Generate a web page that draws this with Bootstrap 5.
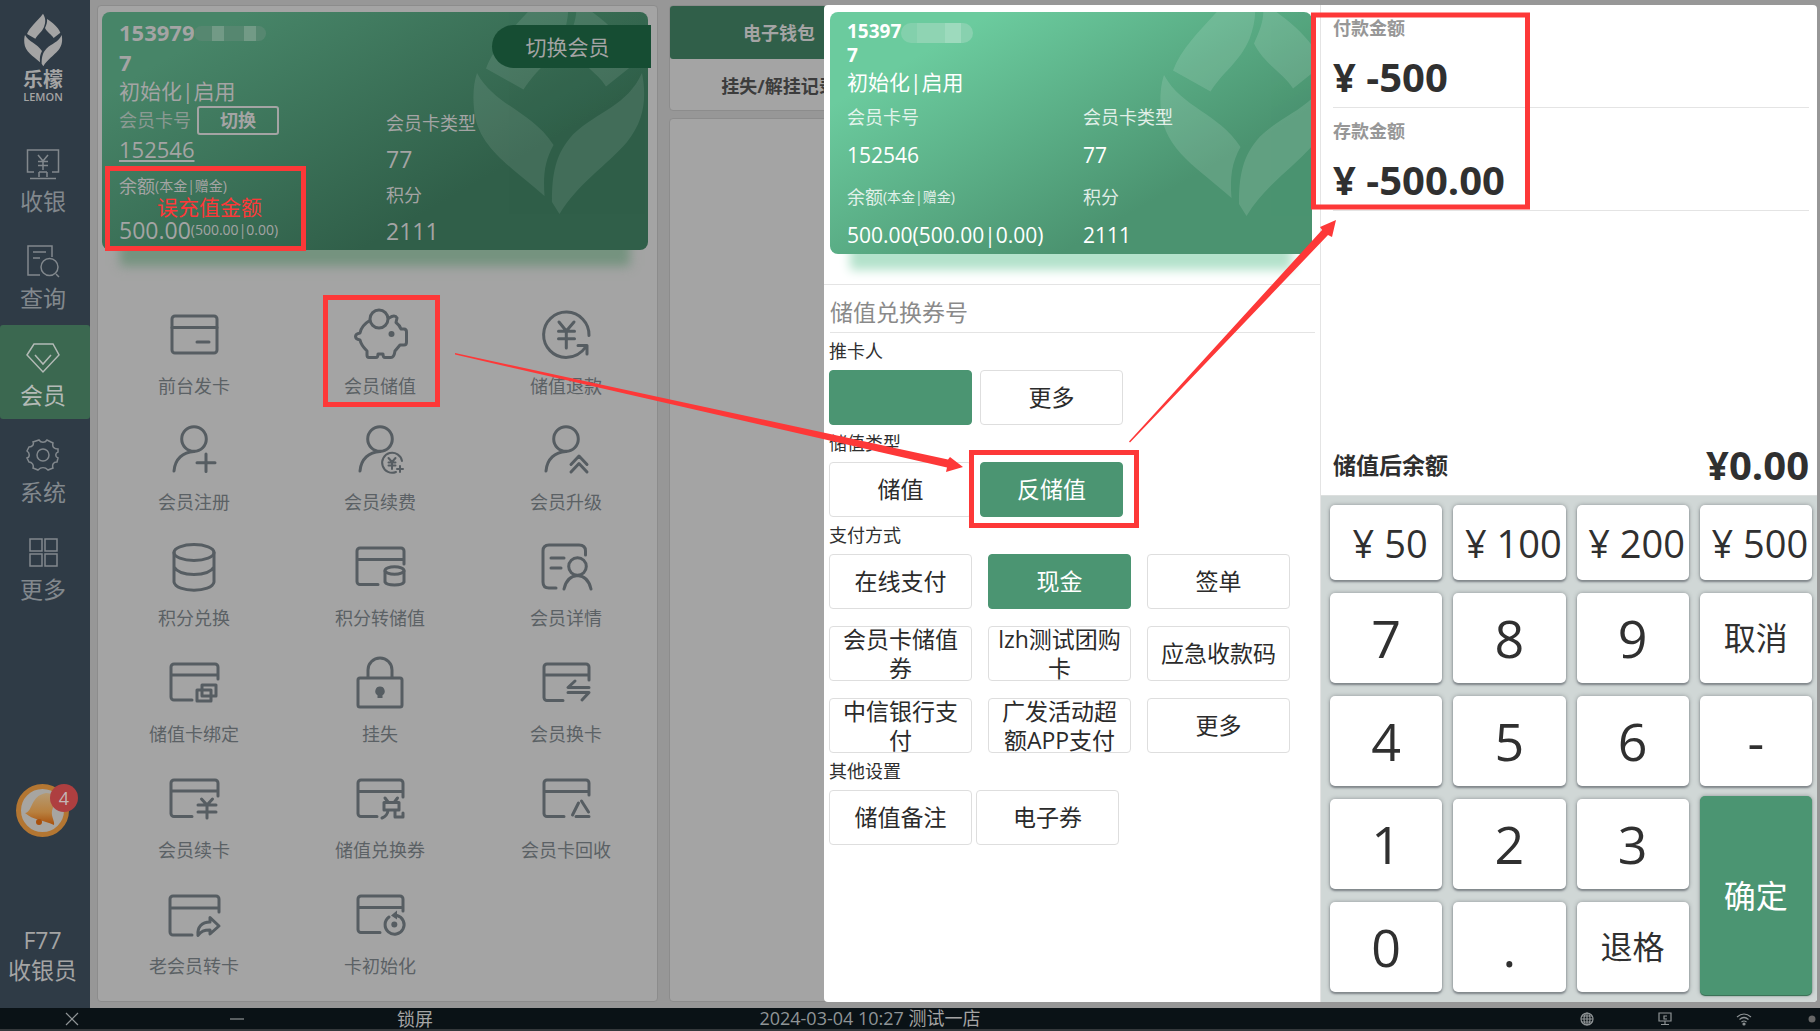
<!DOCTYPE html>
<html lang="zh-CN">
<head>
<meta charset="utf-8">
<meta name="viewport" content="width=device-width, initial-scale=1">
<title>会员储值</title>
<link href="https://cdn.jsdelivr.net/npm/bootstrap@5.3.0/dist/css/bootstrap.min.css" rel="stylesheet">
<script src="https://cdn.jsdelivr.net/npm/bootstrap@5.3.0/dist/js/bootstrap.bundle.min.js"></script>
<style>
:root{--green:#4b9572;--dim-white:#a4a4a4;--dim-bg:#979797;--dim-line:#8c8c8c;--line:#e4e4e4;--red:#fd3838}
body{font-family:"Open Sans","Noto Sans CJK SC",sans-serif;font-size:18px;line-height:24px;background:var(--dim-bg);color:#2f2f2f}
a{text-decoration:none;color:inherit}
button{color:inherit;padding:0}
.pos-app{min-height:100vh}
/* side rail */
.rail{width:90px;background:#2f3b46;color:#82888d;font-size:23px;line-height:28px;flex:none}
.brand-box{height:127px;padding:13px 4px 0 0;color:var(--dim-white);line-height:24px}
.brand-zh{font-size:20px;font-weight:700;line-height:26px}
.brand-en{font-size:11px;line-height:8px;font-weight:600}
.rail-item{height:94px;padding:16px 4px 0 0;gap:6px;margin-bottom:3px}
.rail-item svg{width:34px;height:34px;fill:none;stroke:currentColor;stroke-width:1.5}
.rail-on{background:#3b6850;color:#b3bab6;border-radius:3px}
.rail-foot{padding-right:5px}
.bell-btn{width:53px;height:53px;border-radius:50%;border:5px solid #b37632;background:#a7a5a1;margin-bottom:88px}
.bell-count{width:28px;height:28px;border-radius:50%;background:#ae3f40;color:#c4b7b6;font-size:18px;line-height:28px;right:-14px;top:-5px}
.cashier{font-size:23px;line-height:30px;color:var(--dim-white);margin-bottom:23px}
/* dimmed page under the dialog */
.stage{padding:5px 3px 6px 7px;gap:11px}
.sheet{background:var(--dim-white);border:1px solid var(--dim-line);border-radius:4px}
.sheet-main{width:561px;flex:none;padding:6px 0 11px}
.vip{color:#fff;border-radius:8px;overflow:hidden;padding-left:17px}
.vip-wrap{position:relative;border-radius:8px}
.vip-dim{background:linear-gradient(150deg,#478568 15%,#305f49 70%);color:var(--dim-white);height:238px;padding-top:5px}
.wrap-dim{margin:0 9px 0 4px;box-shadow:0 34px 10px -18px #75937f}
.vip-live{background:linear-gradient(150deg,#6bcb9e 18%,#4b9370 72%);height:242px;padding-top:7px}
.wrap-live{margin:7px 8px 0 6px;box-shadow:0 36px 10px -20px #b3e2cb}
.leaf{position:absolute;width:180px;height:243px;top:-36px;fill:#fff;opacity:.12}
.wrap-dim .leaf{right:0;top:-38px;opacity:.09}
.wrap-live .leaf{right:-23px}
.vip-clip{position:relative}
.t23{font-size:23px}
.t14{font-size:14px;line-height:18px}
.vip-dim .num{font-size:22px;font-weight:700;line-height:30px}
.vip-dim .state{font-size:21px;line-height:28px}
.vip-live .num{font-size:19px;font-weight:700;line-height:24px}
.vip-live .state{font-size:21px;line-height:30px}
.veil{display:inline-block;width:72px;height:15px;border-radius:8px;background:linear-gradient(90deg,#568770 0 18px,#729a86 18px 30px,#568770 30px 50px,#729a86 50px 62px,#568770 62px)}
.vip-live .veil{height:20px;border-radius:10px;background:linear-gradient(90deg,#83d0ac 0 16px,#8fd4b3 16px 44px,#9ddabd 44px 60px,#88d1af 60px);vertical-align:middle}
.c-left{width:267px;flex:none}
.vip-live .c-left{width:236px}
.vip-dim .c-right div{line-height:36px}
.row-card{line-height:30px;gap:6px}
.row-no{line-height:28px;font-size:22px}
.row-lab{line-height:24px;margin-top:11px}
.row-bal{line-height:24px;margin-top:20px}
.swap-btn{width:82px;height:29px;border:2px solid var(--dim-white);border-radius:3px;background:none;font-weight:700;font-size:18px;line-height:24px}
.lab40{line-height:40px;font-size:18px;opacity:.82}
.val34{line-height:36px;font-size:21px;margin-bottom:4px;white-space:nowrap}
.change-vip{position:absolute;right:-3px;top:13px;width:159px;height:43px;border:0;border-radius:22px 0 0 22px;background:#164d33;color:var(--dim-white);font-size:21px;padding-right:8px}
.fn-grid{display:grid;grid-template-columns:repeat(3,1fr);grid-auto-rows:minmax(110px,1fr);margin:45px -2px 0 0;padding-left:3px;color:#5b6165}
.fn-grid a{gap:11px}
.fn-grid svg{width:56px;height:56px;fill:none;stroke:#565d62;stroke-width:3;stroke-linecap:round;stroke-linejoin:round}
.fn-grid .sol{fill:#565d62;stroke:none}
.fn-grid .thin{stroke-width:2}
.tabs-col{gap:7px}
.tab-strip{height:106px}
.tab-strip a{width:218px;height:53px;line-height:54px;font-weight:700;color:#3c3c3c;text-align:center}
.tab-strip .tab-on{background:#305f49;color:var(--dim-white);border-radius:3px}
/* dialog */
.dlg{position:absolute;top:5px;bottom:6px;right:3px;width:57.4%;background:#fff;border-radius:4px;overflow:hidden}
.dlg-form{border-right:1px solid var(--line)}
.coupon{border:0;border-bottom:1px solid var(--line);height:48px;font-size:23px;padding:6px 0 0;margin:0 5px 0 6px;outline:0;border-radius:0;background:none}
.coupon::placeholder{color:#8a8a8a;opacity:1}
.rule{border-top:1px solid var(--line);margin-top:30px}
.set{border:0;padding:0 5px;margin:0;min-width:0}
.set legend{font-size:18px;line-height:37px;margin:0;float:none}
.opt{width:143px;height:55px;border:1px solid #dedede;border-radius:4px;background:#fff;font-size:23px;line-height:29px;color:#2b2b2b;display:flex;align-items:center;justify-content:center}
.opt-on{background:var(--green);border-color:var(--green);color:#fff}
.pay-grid{display:grid;grid-template-columns:repeat(3,143px);gap:17px 16px}
.dlg-pay{flex:0 0 496px}
.amt{padding:9px 0 2px;margin:0 8px 0 12px;border-bottom:1px solid var(--line)}
.amt-lab{font-weight:600;color:#979797;line-height:28px;margin-bottom:7px}
.amt-val{font-size:40px;font-weight:700;line-height:56px;color:#303030}
.after{height:57px;padding:0 8px 4px 12px;border-bottom:1px solid #dcdfde}
.pad{display:grid;grid-template-columns:repeat(4,1fr);grid-template-rows:75px repeat(4,90px);gap:13px 11px;padding:9px 5px 10px 9px;background:#d0d7d6}
.key{border:0;border-radius:5px;background:#fff;color:#303030;font-size:52px;line-height:60px;box-shadow:0 2px 2px #82888c,0 0 4px #8e9497}
.key-cash{font-size:38px;padding-left:8px;white-space:nowrap}
.key-zh{font-size:32px}
.key-ok{background:var(--green);color:#fff;grid-row:span 2;margin:-3px 0;box-shadow:0 1px 1px #2f6b4d,0 0 4px #8e9497}
/* status bar */
.status{display:grid;grid-template-columns:144fr 186fr 170fr 740fr 308fr 78fr 78fr 80fr 36fr;height:23px;background:#0a1216;color:#8f9496;border-bottom:2px solid #34383b;line-height:21px;place-items:center}
.status button{border:0;background:none;line-height:20px;color:var(--dim-white)}
.status .shop{color:var(--dim-white)}
.status svg{display:block;fill:none;stroke:#8f9496;stroke-width:1.2}
/* teaching marks drawn over the screen */
.marks{position:absolute;left:0;top:0;width:100%;height:100%;pointer-events:none;z-index:5}
.note{position:absolute;left:55px;top:185px;color:var(--red);font-size:21px;line-height:20px;z-index:6}
</style>
</head>
<body>
<svg class="d-none">
  <symbol id="lemon" viewBox="70 38 120 162">
    <path d="M130 40C139 54 138 66 133 80C126 96 116 101 107 115L82 101C90 80 112 64 130 40Z"/>
    <path d="M142 56C158 66 175 80 182 97L162 113C156 103 143 97 136 83C141 72 143 66 142 56Z"/>
    <path d="M76 104C88 126 112 129 127 152C121 163 120 172 121 186C100 167 76 154 74 128C73 118 74 110 76 104Z"/>
    <path d="M186 104C189 120 188 135 176 150C162 166 143 178 131 198L126 190C126 172 128 158 140 145C157 129 176 126 186 104Z"/>
  </symbol>
</svg>
<div class="pos-app d-flex flex-column position-relative">
  <div class="d-flex flex-grow-1">
    <nav class="rail d-flex flex-column text-center">
      <div class="brand-box mb-1">
        <svg width="40" height="54" fill="#a4a4a4" class="d-block mx-auto"><use href="#lemon"/></svg>
        <div class="brand-zh">乐檬</div><div class="brand-en">LEMON</div>
      </div>
      <a href="#" class="rail-item d-flex flex-column align-items-center"><svg viewBox="0 0 34 34"><path d="M8 25H1.500V3h31v22H26M13 25v5M21 25v5M13 25h8M4 31.500h26M12 8l5 6 5-6M17 14v9M12 14.500h10M12 18.500h10"/></svg>收银</a>
      <a href="#" class="rail-item d-flex flex-column align-items-center"><svg viewBox="0 0 34 34"><path d="M14 31H2V2h24v11M7 8h13M7 14h7M30 30l3 3"/><circle cx="23.500" cy="23" r="8.500"/></svg>查询</a>
      <a href="#" class="rail-item rail-on d-flex flex-column align-items-center"><svg viewBox="0 0 34 34"><path d="M8 3h19l6 11-16 17L1 14ZM9 14l8 9 8-9"/></svg>会员</a>
      <a href="#" class="rail-item d-flex flex-column align-items-center"><svg viewBox="0 0 34 34"><path d="M13 2c2 3 6 3 8 0l6 3c-1 4 1 6 5 6v3c-3 1-3 5 0 6l-1 4c-4 0-5 3-4 6l-5 2c-3-3-7-3-10 0l-5-2c1-3-1-6-4-6l-2-4c3-1 3-5 0-7l2-4c4 0 5-3 4-5Z"/><circle cx="17" cy="17" r="6"/></svg>系统</a>
      <a href="#" class="rail-item d-flex flex-column align-items-center"><svg viewBox="0 0 34 34"><path d="M4 4h12v12H4ZM19 4h12v12H19ZM4 19h12v12H4ZM19 19h12v12H19Z"/></svg>更多</a>
      <div class="rail-foot mt-auto">
        <button type="button" class="bell-btn position-relative d-block mx-auto" aria-label="通知">
          <svg viewBox="0 0 43 43" class="d-block w-100 h-100"><defs><linearGradient id="bl" x1="0" y1="0" x2="0" y2="1"><stop offset="0" stop-color="#b59a72"/><stop offset=".6" stop-color="#b8803f"/><stop offset="1" stop-color="#a8500c"/></linearGradient></defs><path d="M4 24C12 23 9 7 25 4C37 4 33 16 31 22C30 28 34 32 33 36C22 31 12 31 4 24Z" fill="url(#bl)"/><circle cx="18" cy="33" r="3" fill="#a8500c"/></svg>
          <span class="bell-count position-absolute">4</span>
        </button>
        <div class="cashier">F77<br>收银员</div>
      </div>
    </nav>

    <main class="stage d-flex flex-grow-1 position-relative">
      <section class="sheet sheet-main d-flex flex-column">
        <div class="vip-wrap wrap-dim">
          <div class="vip vip-dim vip-clip">
            <svg class="leaf"><use href="#lemon"/></svg>
            <div class="num">153979<span class="veil"></span><br>7</div>
            <div class="state">初始化|启用</div>
            <div class="d-flex">
              <div class="c-left">
                <div class="row-card d-flex align-items-center"><span class="opacity-75">会员卡号</span><button type="button" class="swap-btn">切换</button></div>
                <div class="row-no"><a href="#" class="text-decoration-underline">152546</a></div>
                <div class="row-lab d-flex align-items-center">余额<span class="t14">(本金|赠金)</span></div>
                <div class="row-bal d-flex align-items-center"><span class="t23">500.00</span><span class="t14">(500.00|0.00)</span></div>
              </div>
              <div class="c-right"><div>会员卡类型</div><div class="t23">77</div><div>积分</div><div class="t23">2111</div></div>
            </div>
            <span class="note">误充值金额</span>
          </div>
          <button type="button" class="change-vip">切换会员</button>
        </div>
        <div class="fn-grid flex-grow-1 text-center">
          <a href="#" class="d-flex flex-column align-items-center justify-content-center"><svg viewBox="0 0 56 56"><rect x="6" y="9" width="45" height="37" rx="3"/><path d="M6 20.500h45M31 35h12"/></svg>前台发卡</a>
          <a href="#" class="d-flex flex-column align-items-center justify-content-center"><svg viewBox="0 0 56 56"><circle cx="27" cy="12" r="9"/><path d="M17 14C12 17 9 21 8 26C2 27 2 32 8 33C9 38 12 41 15 44V48Q15 50.500 17 50.500H24Q26 50.500 26 47H31Q31 50.500 33 50.500H39Q42 50.500 43 44L48 38H52Q54.500 38 54.500 35V25Q54.500 22 52 22H49C48 19 46 17 44 15.500L45 11Q43 7 37 11"/><circle class="sol" cx="39.500" cy="27" r="3"/></svg>会员储值</a>
          <a href="#" class="d-flex flex-column align-items-center justify-content-center"><svg viewBox="0 0 56 56"><path d="M51 28.500A22.700 22.700 0 1 0 28 50.500C36 50.500 43 47 48.500 39M40 38.500h9V47M21 15l7.300 9L36 15M28.300 24v17M20.500 24.300h16M20.500 31.700h16"/></svg>储值退款</a>
          <a href="#" class="d-flex flex-column align-items-center justify-content-center"><svg viewBox="0 0 56 56"><circle cx="28" cy="16" r="12.300"/><path d="M8 48C9 36 17 29 28 28.500M40 31v17.500M31 39.700h18"/></svg>会员注册</a>
          <a href="#" class="d-flex flex-column align-items-center justify-content-center"><svg viewBox="0 0 56 56"><circle cx="28" cy="16" r="12.300"/><path d="M8 48C9 36 17 29 28 28.500"/><path class="thin" d="M50 38A10 10 0 1 0 44 49M36.500 35l3.500 4 3.500-4M40 39v7M36.500 39.500h7M36.500 42.500h7M48 43v6M45 46h6"/></svg>会员续费</a>
          <a href="#" class="d-flex flex-column align-items-center justify-content-center"><svg viewBox="0 0 56 56"><circle cx="28" cy="16" r="12.300"/><path d="M8 48C9 36 17 29 28 28.500M33 41.500l8-8.500 8 8.500M33 49l8-8.500 8 8.500"/></svg>会员升级</a>
          <a href="#" class="d-flex flex-column align-items-center justify-content-center"><svg viewBox="0 0 56 56"><ellipse cx="28" cy="13.500" rx="20" ry="8"/><path d="M8 13.500V43C10 54 46 54 48 43V13.500M8 28C14 38 42 38 48 28"/></svg>积分兑换</a>
          <a href="#" class="d-flex flex-column align-items-center justify-content-center"><svg viewBox="0 0 56 56"><path d="M26 45.500H8a3 3 0 0 1-3-3V12a3 3 0 0 1 3-3h41a3 3 0 0 1 3 3v13M5 20.500h47"/><ellipse cx="42.500" cy="31.500" rx="9.500" ry="3.800"/><path d="M33 32V43C35 47 50 47 52 43V32"/></svg>积分转储值</a>
          <a href="#" class="d-flex flex-column align-items-center justify-content-center"><svg viewBox="0 0 56 56"><path d="M18 49H11Q5 49 5 43V12Q5 6 11 6H41Q47.500 6 47.500 12V16M13 19h13M13 29h10"/><circle cx="39.500" cy="27.500" r="8.800"/><path d="M26 50C28 41 33 37 39.500 36.500C46 37 51 41 53 50"/></svg>会员详情</a>
          <a href="#" class="d-flex flex-column align-items-center justify-content-center"><svg viewBox="0 0 56 56"><path d="M26 45H8a3 3 0 0 1-3-3V12a3 3 0 0 1 3-3h41a3 3 0 0 1 3 3v12M6 20h45M36 30h14v11H36ZM31 35h14v11H31Z"/></svg>储值卡绑定</a>
          <a href="#" class="d-flex flex-column align-items-center justify-content-center"><svg viewBox="0 0 56 56"><rect x="6" y="23" width="44" height="29" rx="2"/><path d="M16 22V15A12 12 0 0 1 40 15V22"/><path class="sol" d="M28 31.500a4.700 4.700 0 0 1 2.500 8.700V43h-5v-2.800A4.700 4.700 0 0 1 28 31.500Z"/></svg>挂失</a>
          <a href="#" class="d-flex flex-column align-items-center justify-content-center"><svg viewBox="0 0 56 56"><path d="M25 45.500H9a3 3 0 0 1-3-3V12a3 3 0 0 1 3-3h39a3 3 0 0 1 3 3v13M6 20h45M37 26l-7 6.500h21M30 37.500h21l-7 7.500"/></svg>会员换卡</a>
          <a href="#" class="d-flex flex-column align-items-center justify-content-center"><svg viewBox="0 0 56 56"><path d="M26 45.500H8a3 3 0 0 1-3-3V12a3 3 0 0 1 3-3h41a3 3 0 0 1 3 3v13M6 20h45M35.500 28l5.500 6 5.500-6M41 34v13M32 34h18M32 41h18"/></svg>会员续卡</a>
          <a href="#" class="d-flex flex-column align-items-center justify-content-center"><svg viewBox="0 0 56 56"><path d="M25 45.500H9a3 3 0 0 1-3-3V12a3 3 0 0 1 3-3h39a3 3 0 0 1 3 3v14M6 20.500h45"/><path d="M33 27l3 4M45.500 27l-3 4M32 31.500h15v7.500H32ZM36 39C36 43 33 46 30 47M43 39v7h8v-4"/></svg>储值兑换券</a>
          <a href="#" class="d-flex flex-column align-items-center justify-content-center"><svg viewBox="0 0 56 56"><path d="M26 45.500H9a3 3 0 0 1-3-3V12a3 3 0 0 1 3-3h39a3 3 0 0 1 3 3v12M6 20.500h45M34.500 44l6-12M43.500 30l7 11M38 45.500h13"/></svg>会员卡回收</a>
          <a href="#" class="d-flex flex-column align-items-center justify-content-center"><svg viewBox="0 0 56 56"><path d="M26 48H7a3 3 0 0 1-3-3V12a3 3 0 0 1 3-3h43a3 3 0 0 1 3 3v13M4 21h49M32 48.500C31 40 36 35 44 35V30.500L53 39 44 47V43C38 43 35 44 32 48.500Z"/></svg>老会员转卡</a>
          <a href="#" class="d-flex flex-column align-items-center justify-content-center"><svg viewBox="0 0 56 56"><path d="M28 45.500H9a3 3 0 0 1-3-3V12a3 3 0 0 1 3-3h39a3 3 0 0 1 3 3v12M6 20.500h45M37 30A9.500 9.500 0 1 0 45 28.500"/><circle class="sol" cx="42.300" cy="37.500" r="3"/><path class="sol" d="M39 28.500l6-5v9Z"/></svg>卡初始化</a>
        </div>
      </section>
      <section class="tabs-col d-flex flex-column flex-grow-1">
        <div class="sheet tab-strip"><a href="#" class="tab-on d-block">电子钱包</a><a href="#" class="d-block">挂失/解挂记录</a></div>
        <div class="sheet flex-grow-1"></div>
      </section>

      <div class="dlg d-flex" role="dialog" aria-label="会员储值">
        <form class="dlg-form flex-grow-1 d-flex flex-column">
          <div class="vip-wrap wrap-live">
            <div class="vip vip-live vip-clip">
              <svg class="leaf"><use href="#lemon"/></svg>
              <div class="num">15397<span class="veil"></span><br>7</div>
              <div class="state">初始化|启用</div>
              <div class="d-flex">
                <div class="c-left"><div class="lab40">会员卡号</div><div class="val34">152546</div><div class="lab40 d-flex align-items-center">余额<span class="t14">(本金|赠金)</span></div><div class="val34">500.00(500.00|0.00)</div></div>
                <div><div class="lab40">会员卡类型</div><div class="val34">77</div><div class="lab40">积分</div><div class="val34">2111</div></div>
              </div>
            </div>
          </div>
          <div class="rule"></div>
          <input class="coupon" type="text" placeholder="储值兑换券号" aria-label="储值兑换券号">
          <fieldset class="set"><legend>推卡人</legend><div class="d-flex gap-2"><button type="button" class="opt opt-on" aria-label="当前推卡人"></button><button type="button" class="opt">更多</button></div></fieldset>
          <fieldset class="set"><legend>储值类型</legend><div class="d-flex gap-2"><button type="button" class="opt">储值</button><button type="button" class="opt opt-on">反储值</button></div></fieldset>
          <fieldset class="set"><legend>支付方式</legend><div class="pay-grid">
            <button type="button" class="opt">在线支付</button><button type="button" class="opt opt-on">现金</button><button type="button" class="opt">签单</button>
            <button type="button" class="opt">会员卡储值<br>券</button><button type="button" class="opt">lzh测试团购<br>卡</button><button type="button" class="opt">应急收款码</button>
            <button type="button" class="opt">中信银行支<br>付</button><button type="button" class="opt">广发活动超<br>额APP支付</button><button type="button" class="opt">更多</button>
          </div></fieldset>
          <fieldset class="set"><legend>其他设置</legend><div class="d-flex gap-1"><button type="button" class="opt">储值备注</button><button type="button" class="opt">电子券</button></div></fieldset>
        </form>
        <div class="dlg-pay d-flex flex-column">
          <div class="amt"><div class="amt-lab">付款金额</div><div class="amt-val">¥ -500</div></div>
          <div class="amt"><div class="amt-lab">存款金额</div><div class="amt-val">¥ -500.00</div></div>
          <div class="after mt-auto d-flex align-items-center justify-content-between"><strong class="t23">储值后余额</strong><span class="amt-val">¥0.00</span></div>
          <div class="pad">
            <button type="button" class="key key-cash">¥ 50</button><button type="button" class="key key-cash">¥ 100</button><button type="button" class="key key-cash">¥ 200</button><button type="button" class="key key-cash">¥ 500</button>
            <button type="button" class="key">7</button><button type="button" class="key">8</button><button type="button" class="key">9</button><button type="button" class="key key-zh">取消</button>
            <button type="button" class="key">4</button><button type="button" class="key">5</button><button type="button" class="key">6</button><button type="button" class="key">-</button>
            <button type="button" class="key">1</button><button type="button" class="key">2</button><button type="button" class="key">3</button><button type="button" class="key key-zh key-ok">确定</button>
            <button type="button" class="key">0</button><button type="button" class="key">.</button><button type="button" class="key key-zh">退格</button>
          </div>
        </div>
      </div>
    </main>
  </div>
  <footer class="status">
    <button type="button" aria-label="关闭"><svg width="14" height="14"><path d="M1 1l12 12M13 1L1 13"/></svg></button>
    <button type="button" aria-label="最小化"><svg width="14" height="14"><path d="M0 7h14"/></svg></button>
    <button type="button">锁屏</button>
    <div>2024-03-04 10:27 <span class="shop">测试一店</span></div>
    <span></span>
    <svg width="14" height="14"><circle cx="7" cy="7" r="6"/><ellipse cx="7" cy="7" rx="3" ry="6"/><path d="M7 1v12M1 7h12M2 4h10M2 10h10"/></svg>
    <svg width="14" height="14"><path d="M1 1h12v8H1ZM7 9v3M3 12.500h8M9 4H6v3h3"/></svg>
    <svg width="16" height="14"><path d="M1 5Q8-1 15 5M3.500 7.500Q8 3.500 12.500 7.500M5.500 10Q8 8 10.500 10"/><circle cx="8" cy="12" r="1" fill="#8f9496"/></svg>
    <svg width="8" height="8" class="ms-auto me-1"><circle cx="4" cy="4" r="3.500" fill="#666" stroke="none"/></svg>
  </footer>
  <svg class="marks" viewBox="0 0 1820 1031" preserveAspectRatio="none" aria-hidden="true">
    <g fill="none" stroke="#fd3838" stroke-width="5"><path d="M107.500 168.500h196v80h-196ZM325.500 297.500h112v107h-112ZM971.500 452.500h165v73h-165ZM1313.500 15h214v192h-214Z"/></g>
    <path fill="#fd3838" d="M455 353L948 459.500L950 457L963 467L946 472L947 467.500L455 354.500ZM1129 441.500L1322 230L1320 227L1336 220L1332 237L1328 235L1130 442.500Z"/>
  </svg>
</div>
</body>
</html>
